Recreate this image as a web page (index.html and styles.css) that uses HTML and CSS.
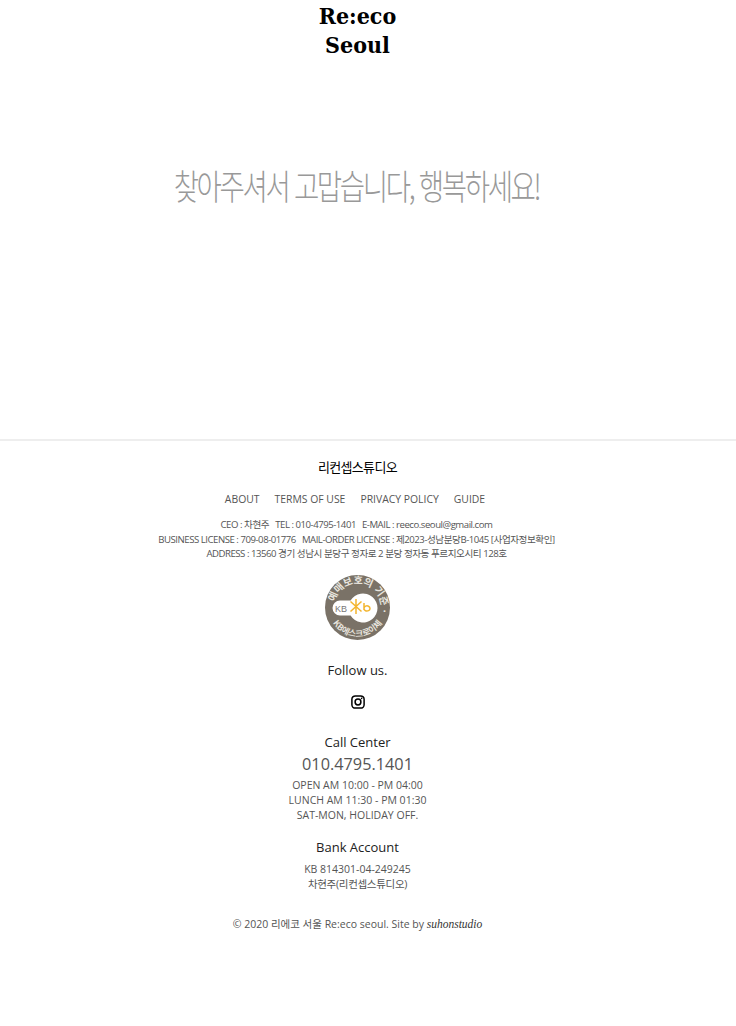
FILE: index.html
```html
<!DOCTYPE html>
<html lang="ko">
<head>
<meta charset="utf-8">
<title>Re:eco Seoul</title>
<link rel="stylesheet" href="styles.css">
</head>
<body>
<header class="site-header">
  <a class="logo">Re:eco<br>Seoul</a>
</header>
<main class="hero">
  <h1 class="hero-title">찾아주셔서 고맙습니다, 행복하세요!</h1>
</main>
<footer class="footer">
  <h2 class="company">리컨셉스튜디오</h2>
  <nav class="menu">
    <a>ABOUT</a><a>TERMS OF USE</a><a>PRIVACY POLICY</a><a>GUIDE</a>
  </nav>
  <div class="info">
    <p>CEO : 차현주 &nbsp; TEL : 010-4795-1401 &nbsp; E-MAIL : reeco.seoul@gmail.com</p>
    <p>BUSINESS LICENSE : 709-08-01776 &nbsp; MAIL-ORDER LICENSE : 제2023-성남분당B-1045 [사업자정보확인]</p>
    <p>ADDRESS : 13560 경기 성남시 분당구 정자로 2 분당 정자동 푸르지오시티 128호</p>
  </div>
  <svg class="badge" viewBox="0 0 65 65" width="65" height="65" aria-label="KB에스크로이체">
    <defs>
      <path id="arc-top" d="M9.4 36.6 A23.5 23.5 0 1 1 51.7 46"/>
      <path id="arc-bottom" d="M3.9 37.5 A29 29 0 0 0 61.1 37.5"/>
    </defs>
    <circle cx="32.5" cy="32.5" r="32.5" fill="#7a7267"/>
    <path d="M15 25.5 H25.6 A14.5 14.5 0 1 1 25.6 40.5 H15 A7.5 7.5 0 0 1 15 25.5 Z" fill="#fff"/>
    <text class="badge-kb" x="10" y="36.5">KB</text>
    <g class="badge-star">
      <path d="M31 24 V39 M25.5 26.5 L36.5 36.5 M25.5 36.5 L36.5 26.5"/>
      <path d="M39 28 V35 M39 33.5 A3 2.6 0 1 0 39 33.4"/>
    </g>
    <text class="badge-text"><textPath href="#arc-top" startOffset="50%">예매보호의 기준 ·</textPath></text>
    <text class="badge-text badge-text-low"><textPath href="#arc-bottom" startOffset="50%">KB에스크로이체</textPath></text>
  </svg>
  <p class="follow">Follow us.</p>
  <a class="insta" aria-label="Instagram">
    <svg viewBox="0 0 14 14" width="14" height="14">
      <rect x="0.9" y="0.9" width="12.2" height="12.2" rx="3.4" class="insta-line"/>
      <circle cx="7" cy="7" r="2.9" class="insta-line"/>
      <circle cx="10.6" cy="3.4" r="0.8" fill="#000"/>
    </svg>
  </a>
  <h3 class="heading call">Call Center</h3>
  <p class="phone">010.4795.1401</p>
  <div class="detail">
    <p>OPEN AM 10:00 - PM 04:00</p>
    <p>LUNCH AM 11:30 - PM 01:30</p>
    <p>SAT-MON, HOLIDAY OFF.</p>
  </div>
  <h3 class="heading bank">Bank Account</h3>
  <div class="detail">
    <p>KB 814301-04-249245</p>
    <p class="holder">차현주(리컨셉스튜디오)</p>
  </div>
  <p class="copyright">© 2020 리에코 서울 Re:eco seoul. Site by <em class="studio">suhonstudio</em></p>
</footer>
</body>
</html>
```
FILE: styles.css
```css
* { box-sizing: border-box; }
html, body { margin: 0; padding: 0; }
body {
  background: #fff;
  color: #555;
  font-family: "Open Sans", "Noto Sans CJK KR", sans-serif;
  text-align: center;
  height: 1026px;
  overflow: hidden;
}
p, h1, h2, h3 { margin: 0; font-weight: 400; }
.site-header { height: 60px; padding-top: 1px; padding-right: 21px; }
.logo {
  display: block;
  font-family: "DejaVu Serif Condensed", "DejaVu Serif", serif;
  font-weight: 700;
  font-stretch: condensed;
  font-size: 23px;
  line-height: 29px;
  color: #000;
}
.hero { height: 379px; padding-top: 101px; padding-right: 23px; }
.hero-title {
  font-family: "Noto Sans CJK KR", sans-serif;
  font-weight: 300;
  font-size: 35px;
  line-height: 48px;
  letter-spacing: -3px;
  color: #999;
  white-space: nowrap;
  transform: scaleX(0.787);
}
.footer { border-top: 2px solid #eee; padding-right: 21px; }
.company { margin-top: 17px; font-size: 13px; line-height: 18px; color: #000; letter-spacing: -0.7px; }
.menu { display: flex; justify-content: center; gap: 15px; margin-top: 14px; padding-right: 5px; font-size: 10.4px; line-height: 18px; color: #555; }
.info { margin-top: 10px; padding-right: 2px; font-size: 9.6px; line-height: 14.5px; color: #555; letter-spacing: -0.47px; }
.badge { display: block; margin: 13px auto 0; }
.badge-kb { font: 400 9px "Liberation Sans", sans-serif; fill: #777; }
.badge-star { fill: none; stroke: #f3b52f; stroke-width: 1.5; }
.badge-text { font: 700 10px "Noto Sans CJK KR", sans-serif; fill: #e8e5df; text-anchor: middle; }
.badge-text-low { font-size: 8.5px; }
.follow { margin-top: 21px; font-size: 13px; line-height: 18px; color: #222; }
.insta { display: block; height: 14px; margin-top: 16px; line-height: 0; }
.insta-line { fill: none; stroke: #000; stroke-width: 1.5; }
.heading { font-size: 13px; line-height: 18px; color: #222; }
.call { margin-top: 24px; }
.phone { margin-top: 2px; font-size: 16.3px; line-height: 22px; color: #555; }
.detail { font-size: 10.5px; line-height: 15px; color: #555; }
.phone + .detail { margin-top: 3px; }
.bank { margin-top: 15px; margin-bottom: 6px; }
.holder { letter-spacing: -0.3px; }
.copyright { margin-top: 24px; font-size: 10.5px; line-height: 16px; color: #555; }
.studio { font-family: "Liberation Serif", serif; font-size: 11.5px; font-style: italic; color: #333; }
```
